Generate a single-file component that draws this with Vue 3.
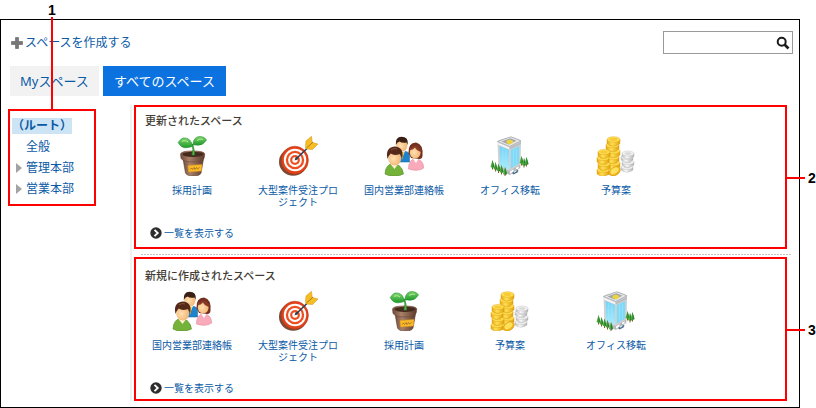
<script setup>
const spaces = {
  plan: { icon: 'plant', name: '採用計画' },
  order: { icon: 'target', name: '大型案件受注プロジェクト' },
  sales: { icon: 'people', name: '国内営業部連絡帳' },
  office: { icon: 'building', name: 'オフィス移転' },
  budget: { icon: 'coins', name: '予算案' },
}

const sections = [
  {
    id: 'updated',
    title: '更新されたスペース',
    callout: '2',
    items: [spaces.plan, spaces.order, spaces.sales, spaces.office, spaces.budget],
  },
  {
    id: 'created',
    title: '新規に作成されたスペース',
    callout: '3',
    items: [spaces.sales, spaces.order, spaces.plan, spaces.budget, spaces.office],
  },
]

const goldBack = [33, 27, 21, 15, 9, 3.5]
const goldFront = [34, 28, 22, 16]
const silver = [31, 26, 21, 17.5]
const trees = [
  [2, 24], [5, 26], [8, 27.5], [11, 29], [14.5, 31],
  [31, 20], [33.5, 22], [36, 21],
]
</script>

<template>
  <svg class="sprite" aria-hidden="true">
    <defs>
      <linearGradient id="leaf" x1="0" y1="0" x2="0" y2="1">
        <stop offset="0" stop-color="#7fd46a" /><stop offset="1" stop-color="#1f9a2c" />
      </linearGradient>
      <linearGradient id="pot" x1="0" y1="0" x2="1" y2="0">
        <stop offset="0" stop-color="#6d4a3a" /><stop offset=".35" stop-color="#a98068" /><stop offset="1" stop-color="#5c3a2c" />
      </linearGradient>
      <linearGradient id="gold" x1="0" y1="0" x2="1" y2="0">
        <stop offset="0" stop-color="#e8a90f" /><stop offset=".4" stop-color="#ffe056" /><stop offset="1" stop-color="#e3a30c" />
      </linearGradient>
      <linearGradient id="silver" x1="0" y1="0" x2="1" y2="0">
        <stop offset="0" stop-color="#bdbdbd" /><stop offset=".4" stop-color="#fafafa" /><stop offset="1" stop-color="#b0b0b0" />
      </linearGradient>
      <linearGradient id="glass" x1="0" y1="0" x2="0" y2="1">
        <stop offset="0" stop-color="#74d3f5" /><stop offset="1" stop-color="#a8ebfd" />
      </linearGradient>
      <radialGradient id="face" cx=".4" cy=".5" r=".6">
        <stop offset="0" stop-color="#ffe0b0" /><stop offset="1" stop-color="#f2b474" />
      </radialGradient>

      <symbol id="plant" viewBox="0 0 40 40">
        <path d="M10.500 20 L13.500 37 Q15 40 21 40 Q28 40 29 37 L32 20Z" fill="url(#pot)" stroke="#5b3b2c" stroke-width=".6" />
        <path d="M8.500 18 Q9 15 20.500 15 Q32.500 15 32.800 18 L32 22.500 Q29 26 21 26 Q12 26 9 22.500Z" fill="url(#pot)" stroke="#6b4736" stroke-width=".6" />
        <ellipse cx="20.800" cy="18.300" rx="10.400" ry="2.600" fill="#452a1e" />
        <path d="M16 29.500 L30 28.500 L29.500 35 L16.500 36Z" fill="#f8b92c" stroke="#e09619" stroke-width=".5" />
        <path d="M18 33.500 l1.500-1.500 1 1.500 1.500-2 1 2 1.500-2 1 1.500 2-1.500" fill="none" stroke="#a06a1a" stroke-width=".8" />
        <path d="M20 19 Q21.500 14 20.500 8 Q22.500 13 22.500 19Z" fill="#63b94a" stroke="#2c8b2e" stroke-width=".8" />
        <path d="M20.500 10.500 Q19 1 11 2 Q9 2.500 6.200 6.500 Q9 12 14 11.800 Q17 11.500 20.500 10.500Z" fill="url(#leaf)" stroke="#1e8f2d" stroke-width=".6" />
        <path d="M20.800 8.800 Q21.500 0.500 28.500 .4 Q33 1 34.500 4 Q31 9.500 26 9.200 Q23.500 9 20.800 8.800Z" fill="url(#leaf)" stroke="#1e8f2d" stroke-width=".6" />
        <path d="M10 5.500 Q13 3.500 16 6 M25 4.500 Q28 2.300 31 3.500" fill="none" stroke="#a5e68c" stroke-width="1.200" />
      </symbol>

      <symbol id="target" viewBox="0 0 40 40">
        <ellipse cx="15.200" cy="25.800" rx="14.200" ry="14" fill="#7b4a34" />
        <ellipse cx="16.800" cy="24.200" rx="13.600" ry="14" fill="#e2421a" stroke="#b03614" stroke-width=".5" />
        <circle cx="17" cy="24" r="11.200" fill="#fff" />
        <circle cx="17" cy="24" r="9.200" fill="#ee4f21" />
        <circle cx="17" cy="24" r="6.900" fill="#fff" />
        <circle cx="17" cy="24" r="4.900" fill="#ee4f21" />
        <circle cx="17" cy="24" r="2.700" fill="#fff" />
        <path d="M17.500 23.500 L31 10.500" stroke="#33404e" stroke-width="1.600" />
        <path d="M16.500 24.500 l1.500-4 2.500 2.500Z" fill="#33404e" />
        <path d="M27.500 11.500 L28 5 L33.500 .3 L34.200 6.500 L40 8 L34.500 13.500 L28.500 13Z" fill="#f7bd24" stroke="#d39a1c" stroke-width=".6" />
        <path d="M28.500 12 L35 6" stroke="#a0701a" stroke-width=".9" />
      </symbol>

      <symbol id="people" viewBox="0 0 40 40">
        <path d="M12 26 V18 Q13 15 18 15 Q24 15 25.500 18 V26Z" fill="#1f82cc" stroke="#15629c" stroke-width=".5" />
        <path d="M15.500 15 L18 22 L21 15Z" fill="#fff" />
        <path d="M17.300 16 L18.500 24 L19.700 16Z" fill="#f0b622" />
        <ellipse cx="17.800" cy="9.500" rx="5.600" ry="6.200" fill="url(#face)" />
        <path d="M11.800 9 Q11 1 17.500 .8 Q24.800 .8 23.800 9 L22.500 6.500 Q18 7.300 15.500 5.500 Q13 6 11.800 9Z" fill="#3b1f14" />
        <path d="M24.500 33 Q24.500 23 32 22.500 Q39.500 24 39.700 32 Q34 36 24.500 33Z" fill="#f9abbb" stroke="#e38598" stroke-width=".6" />
        <path d="M28.500 22 L32 27 L35 22Z" fill="#fff" />
        <path d="M24.500 17 Q24 6.500 32 6.500 Q39.500 8 38.500 20 Q38 23 35.500 23 L27 22Z" fill="#74301f" />
        <ellipse cx="31.200" cy="16.500" rx="5.400" ry="6" fill="url(#face)" />
        <path d="M25.500 14 Q28 9.500 31.500 9.500 Q36 10 37.500 16 Q32.500 14.500 31 11.500 Q29 14 25.500 14Z" fill="#863a27" />
        <path d="M1 38 Q1.500 28 9 27.500 Q18 28 19.500 38 Q14 41 6 40Z" fill="#74b23a" stroke="#528a26" stroke-width=".6" />
        <path d="M6 27.500 L10.500 33 L14.500 27.500Z" fill="#fff2d3" />
        <ellipse cx="10.700" cy="22.500" rx="6.500" ry="7" fill="url(#face)" />
        <path d="M3.500 23 Q1 11.500 10.500 10.500 Q20.500 11 18 22.500 L16 18 Q10 20 6.800 17.500 Q5 19 3.500 23Z" fill="#54291a" />
        <path d="M7 14 Q10 11.500 13 13" fill="none" stroke="#8b503a" stroke-width="1" />
      </symbol>

      <symbol id="building" viewBox="0 0 40 40">
        <path d="M7.500 5.500 Q8 4.500 9 4 L20 .8 Q21.500 .5 23 1 L29.500 3.500 Q31 4 31 5.500 L30.500 32 L20 39 L8.500 34Z" fill="#cfd1d4" />
        <path d="M7.500 5.500 L21 .8 L31 4.800 L19.500 10.500Z" fill="#e6e6e8" stroke="#a3a5aa" stroke-width=".7" />
        <path d="M11.500 5.500 L20.500 2.300 L26.500 4.800 L18.500 8.600Z" fill="#a3a5a8" />
        <path d="M16.500 4.800 l3.500-1.300 3 1.200 v2 l-3.300 1.700 -3.200-1.300Z" fill="#e8d541" />
        <path d="M7.700 6.500 L19.500 11.500 V13.500 L7.800 8.500Z" fill="#f6f6f7" />
        <path d="M19.500 11.500 L31 6 V8 L19.500 13.500Z" fill="#b9bbbf" />
        <path d="M9.700 10 L19 14 L19 34 L10 30Z" fill="url(#glass)" />
        <path d="M20.800 14 L29.300 10 L29 27.500 L20.800 32.500Z" fill="#7fd9f7" />
        <path d="M12.800 12 V31 M15.900 13.500 V32 M23.500 13.500 V30 M26.300 12.500 V28.500" stroke="#a9ebff" stroke-width=".5" />
        <path d="M10 31 L19.500 35 L30 28.500 V31.500 L19.800 38.800 L9.500 34Z" fill="#b7b9bb" />
        <path d="M20 35.500 l3.500-2.200 v2.200 l-3.500 2.300Z M26 31.700 l2.500-1.500 v2 l-2.500 1.500Z" fill="#fff" />
        <path d="M22 37 l4.500-3.500 2 1 -1 2 -4 2Z" fill="#4d6c87" />
        <path d="M23.500 36 l2.500-2 1 .7 -2.500 2Z" fill="#e4f3fa" />
        <g v-for="[x, y] in trees" :key="x">
          <path :d="`M${x + .5} ${y + 6} v3.500`" stroke="#8a5a2c" stroke-width="1" />
          <path :d="`M${x + .5} ${y} l2 7 q-2 1.500 -4 0Z`" fill="#4da83c" />
          <path :d="`M${x + .5} ${y} l2 7 q-1 .7 -2 .8Z`" fill="#2c8230" />
        </g>
      </symbol>

      <symbol id="coins" viewBox="0 0 40 40">
        <g v-for="(y, i) in goldBack" :key="'b' + y">
          <path :d="`M${10 + i % 2} ${y} v4 q6.500 5 13 0 v-4Z`" fill="url(#gold)" stroke="#d1960f" stroke-width=".4" />
          <ellipse :cx="16.5 + i % 2" :cy="y" rx="6.500" ry="2.800" fill="#ffdd4f" stroke="#dca41a" stroke-width=".4" />
          <ellipse :cx="16.5 + i % 2" :cy="y" rx="3.800" ry="1.400" fill="#f7c936" />
        </g>
        <g v-for="(y, i) in silver" :key="'s' + y">
          <path :d="`M${25 + i % 2} ${y} v3 q6 4.500 12 0 v-3Z`" fill="url(#silver)" stroke="#b0b0b0" stroke-width=".4" />
          <ellipse :cx="31 + i % 2" :cy="y" rx="6" ry="2.500" fill="#f2f2f2" stroke="#bbb" stroke-width=".4" />
          <ellipse :cx="31 + i % 2" :cy="y" rx="3.400" ry="1.200" fill="#d9d9d9" />
        </g>
        <g v-for="(y, i) in goldFront" :key="'f' + y">
          <path :d="`M${1 + i % 2} ${y} v4 q6 4.500 12 0 v-4Z`" fill="url(#gold)" stroke="#d1960f" stroke-width=".4" />
          <ellipse :cx="7 + i % 2" :cy="y" rx="6" ry="2.600" fill="#ffdd4f" stroke="#dca41a" stroke-width=".4" />
          <ellipse :cx="7 + i % 2" :cy="y" rx="3.400" ry="1.300" fill="#f7c936" />
        </g>
        <ellipse cx="19" cy="35.300" rx="5.800" ry="4" transform="rotate(-35 19 35.300)" fill="#f0b41e" stroke="#d1960f" stroke-width=".5" />
        <ellipse cx="18.500" cy="34.800" rx="4.500" ry="2.700" transform="rotate(-35 18.500 34.800)" fill="#ffe05a" />
      </symbol>
    </defs>
  </svg>

  <div class="page">
    <div class="window">
      <header class="header">
        <a class="create" href="#">
          <svg class="plus" viewBox="0 0 12 12" aria-hidden="true">
            <path d="M4.500 .5h3v4h4v3h-4v4h-3v-4h-4v-3h4z" fill="#777" stroke="#5f5f5f" stroke-width=".6" />
          </svg>
          <span>スペースを作成する</span>
        </a>
        <form class="search" role="search" @submit.prevent>
          <input class="search-input" type="text" aria-label="検索" />
          <button class="search-button" type="submit" aria-label="検索">
            <svg viewBox="0 0 14 14" width="14" height="14" aria-hidden="true">
              <circle cx="5.700" cy="5.700" r="4" fill="none" stroke="#1c1c1c" stroke-width="2" />
              <path d="M8.500 8.500 L12.500 12.500" stroke="#1c1c1c" stroke-width="2.600" />
            </svg>
          </button>
        </form>
      </header>

      <nav class="tabs">
        <a class="tab" href="#">Myスペース</a>
        <a class="tab active" href="#" aria-current="page">すべてのスペース</a>
      </nav>

      <div class="body">
        <nav class="tree marked">
          <span class="callout callout-top">1</span>
          <ul>
            <li><a class="root" href="#">（ルート）</a></li>
            <li class="leaf"><a href="#">全般</a></li>
            <li><span class="arrow"></span><a href="#">管理本部</a></li>
            <li><span class="arrow"></span><a href="#">営業本部</a></li>
          </ul>
        </nav>

        <main class="main">
          <template v-for="section in sections" :key="section.id">
            <section class="section marked" :class="section.id">
              <h2>{{ section.title }}</h2>
              <ul class="items">
                <li v-for="item in section.items" :key="item.icon">
                  <a class="item" href="#">
                    <svg class="icon" aria-hidden="true"><use :href="'#' + item.icon" /></svg>
                    <span>{{ item.name }}</span>
                  </a>
                </li>
              </ul>
              <a class="more" href="#">
                <svg viewBox="0 0 12 12" width="12" height="12" aria-hidden="true">
                  <circle cx="6" cy="6" r="5.700" fill="#2d2d2d" />
                  <path d="M4.500 2.800 L7.800 6 L4.500 9.200" fill="none" stroke="#fff" stroke-width="1.800" />
                </svg>
                <span>一覧を表示する</span>
              </a>
              <span class="callout callout-right">{{ section.callout }}</span>
            </section>
            <hr v-if="section.id === 'updated'" class="rule" />
          </template>
        </main>
      </div>
    </div>
  </div>
</template>

<style>
body {
  margin: 0;
  background: #fff;
}
</style>

<style scoped>
* {
  box-sizing: border-box;
}
.sprite {
  position: absolute;
  width: 0;
  height: 0;
}
.page {
  padding: 19px 16px 0 0;
  font-family: "Noto Sans", "Noto Sans CJK JP", sans-serif;
  font-size: 12px;
  line-height: 16px;
}
.window {
  border: 1px solid #000;
  padding-bottom: 6px;
}
a {
  color: #0a5aa6;
  text-decoration: none;
}
ul {
  list-style: none;
  margin: 0;
  padding: 0;
}
.header {
  display: flex;
  justify-content: space-between;
  align-items: center;
  padding: 11px 6px 0 10px;
}
.create {
  display: flex;
  align-items: center;
  gap: 2px;
}
.plus {
  width: 12px;
  height: 12px;
}
.search {
  display: flex;
  width: 130px;
  height: 23px;
  border: 1px solid #999;
}
.search-input {
  flex: 1;
  min-width: 0;
  border: 0;
  padding: 0 4px;
  background: none;
  outline: none;
}
.search-button {
  display: flex;
  align-items: center;
  padding: 0 2px;
  border: 0;
  background: none;
}
.tabs {
  display: flex;
  gap: 4px;
  padding: 12px 9px 0;
}
.tab {
  padding: 0 10px;
  font-size: 13px;
  line-height: 30px;
  background: #f2f2f2;
}
.tab.active {
  padding: 0 11px;
  color: #fff;
  background: #0c72e0;
}
.body {
  display: flex;
  align-items: flex-start;
  padding: 9px 7px 0;
}
.marked {
  position: relative;
  border: 2px solid #f00;
}
.tree {
  flex: none;
  width: 88px;
  margin-top: 4px;
  padding: 4px 2px 5px;
}
.tree li {
  display: flex;
  align-items: center;
  gap: 4px;
  height: 21px;
  padding-left: 4px;
}
.tree li:first-child {
  padding-left: 0;
}
.tree .leaf {
  padding-left: 14px;
}
.root {
  font-weight: bold;
  background: #cde4f4;
}
.arrow {
  border: 5px solid transparent;
  border-left: 6px solid #a3a3a3;
  border-right: 0;
}
.main {
  flex: 1;
  min-width: 0;
  margin-left: 34px;
  border-left: 2px solid #f1f1f1;
  padding-left: 2px;
}
.section {
  margin-right: 5px;
  padding: 6px 3px;
}
.section.created {
  padding: 9px 3px 3px;
}
.section h2 {
  margin: 0 0 7px 6px;
  font-size: 11px;
  font-weight: 500;
  line-height: 16px;
  color: #433d36;
}
.items {
  display: flex;
}
.items li {
  width: 106px;
  min-height: 72px;
}
.item {
  display: flex;
  flex-direction: column;
  align-items: center;
  gap: 8px;
  padding: 0 12px;
  font-size: 10px;
  line-height: 12px;
  text-align: center;
}
.icon {
  width: 40px;
  height: 40px;
}
.more {
  display: inline-flex;
  align-items: center;
  gap: 2px;
  margin: 17px 0 0 11px;
  font-size: 10px;
  line-height: 16px;
  vertical-align: top;
}
.rule {
  height: 1px;
  margin: 5px 0 2px 7px;
  border: 0;
  background: repeating-linear-gradient(90deg, #c4c4c4 0 2px, #fff 2px 3px);
}
.callout {
  position: absolute;
  display: flex;
  align-items: center;
  font: bold 14px/14px "Liberation Sans", Arial, sans-serif;
  color: #000;
}
.callout::before {
  content: "";
  background: #f00;
}
.callout-top {
  bottom: 100%;
  left: 38px;
  flex-direction: column-reverse;
}
.callout-top::before {
  width: 2px;
  height: 94px;
}
.callout-right {
  top: 64px;
  left: 100%;
  gap: 3px;
}
.callout-right::before {
  width: 20px;
  height: 2px;
}
</style>
